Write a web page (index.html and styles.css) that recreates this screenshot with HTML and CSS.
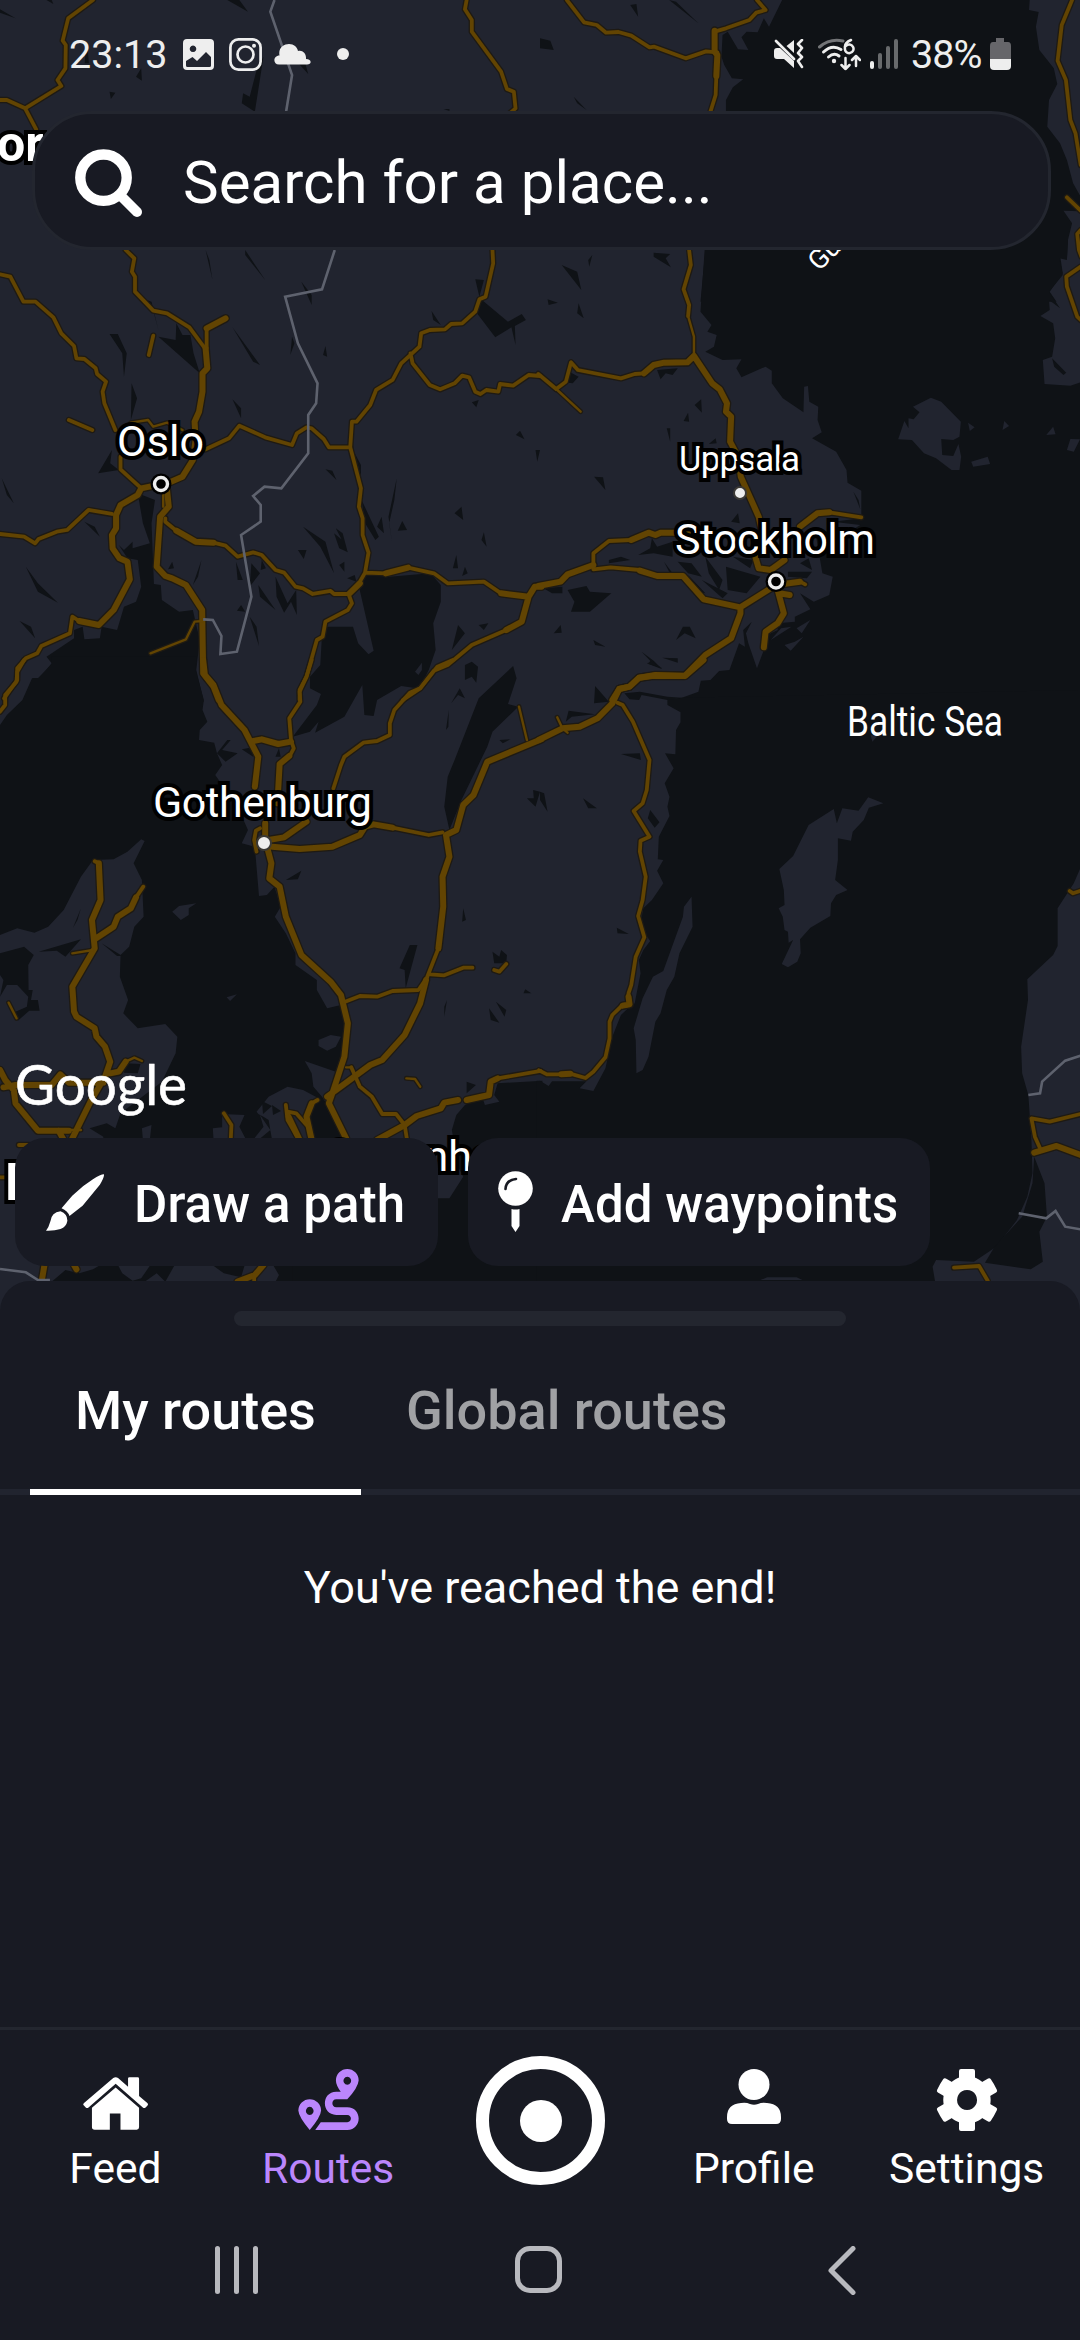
FILE: index.html
```html
<!DOCTYPE html>
<html lang="en">
<head>
<meta charset="utf-8">
<title>Routes</title>
<link rel="stylesheet" href="styles.css">
</head>
<body>
<div class="screen">
<svg class="map" viewBox="0 0 1080 1320" width="1080" height="1320" aria-label="Map">
<defs>
<g id="roads">
<g transform="scale(.34439 .33333)">
<path class="mid" d="M270 0L198 55 182 122 191 135 190 205 167 240 178 258 73 325 105 388M0 300L20 300 73 325M1355 0L1350 28 1370 60 1370 95 1455 215 1472 267 1492 275 1497 325 1480 340"/>
</g>
<g transform="translate(540 0) scale(.34439 .33333)">
<path class="mid" d="M78 0L128 67 165 75 192 98 228 96 265 107 318 142 332 140 423 175 482 154 515 157M512 228L510 285 495 335M630 0L655 30 628 38 608 60 540 85 507 95M1545 0L1515 75 1503 182 1527 240 1540 360 1555 400 1570 495M1530 592L1570 632M1570 690L1560 702 1565 750 1572 770"/>
<path class="major" d="M507 92L507 155 515 165 512 228"/>
</g>
<g transform="translate(0 240) scale(.34439 .33333)">
<path class="mid" d="M365 30L390 55 383 95 392 110 392 155 445 212 485 220 550 262 595 325M600 265L600 325M230 1143L210 1130 203 1180 120 1218 108 1240 75 1255 50 1285 50 1320 12 1375M0 103L30 110 68 185 103 185 155 232 178 280 215 318 222 355 245 357 278 385 282 402 308 425 298 455 303 490 335 570M350 650L350 688 405 740M200 540L268 570M445 287L432 345M0 882L70 890 102 910 112 897 165 875 195 870 257 810 325 822M480 835L480 845 512 872M620 908L655 917 690 950 735 937 760 945 800 990 825 998 858 1040 880 1045 908 1062 960 1053 970 1062 1012 1062M597 628L665 595 695 557 770 592 848 615 862 580 890 562 905 565 940 597 955 622 1017 622"/>
<path class="mid" d="M1430 30L1432 70 1410 170 1392 178 1380 215 1342 250 1310 252 1292 268 1248 270 1223 280 1218 320 1165 370 1140 420 1092 450 1075 495 1035 545 1022 545 1017 622 1048 745 1042 800 1053 835 1053 885 1070 938 1060 998 1045 1025 1012 1062 1022 1090 1010 1110 945 1145 937 1190 920 1200 890 1310 870 1350 870 1380M1192 340L1198 370 1248 435 1278 448 1320 430 1342 407 1362 412 1380 455 1395 462 1412 450 1447 455 1452 432 1490 437 1535 405 1568 408M1060 998L1120 1000M1185 983L1260 1000 1300 1030 1405 1025 1455 1060M1470 1170L1370 1215 1300 1275 1260 1292 1220 1345 1170 1380"/>
<path class="major" d="M655 235L600 265M597 325L602 385 588 400 588 455 578 515 565 545 568 600 560 660 530 710 490 728 410 745 400 765 350 795 337 825 337 865 325 885 327 925 347 955 370 965 377 1018 330 1110 287 1155 230 1143M485 750L490 800 465 830 455 980 480 1008 500 1015 540 1035 587 1110 590 1300 620 1340 635 1380M512 872L568 905 620 908M1045 1030L1015 1060M1120 1000L1185 983M1455 1060L1535 1070M1572 1040L1553 1040 1535 1070 1515 1145 1470 1170"/>
<path class="minor" d="M437 1240L540 1198 565 1145 590 1143M380 548L430 540 445 560 485 548 530 570M474 765V800"/>
</g>
<g transform="translate(540 240) scale(.34439 .33333)">
<path class="mid" d="M433 30L438 75 417 148 433 195 430 228M302 400L275 402 235 415 110 390 90 367 75 425 47 447M-5 402L47 447M155 985L155 940 200 903 265 900M155 988L205 982 290 990M755 1025L770 1033M840 817L933 832M1570 80L1528 110 1530 140 1560 230 1570 240"/>
<path class="major" d="M447 348L500 430 522 448 543 490 540 515 555 530 552 605 575 650 583 710 635 830 650 900M447 348L428 367 360 368 330 375 302 400M-5 1038L60 1025 80 1003 155 975M265 900L315 878 335 885 350 878 430 878M290 992L340 1008 415 1008 475 1078 582 1102 685 1035 755 1025M582 1102L582 1120 555 1195 480 1245 420 1308 330 1307 288 1313 260 1340 230 1347 210 1380M690 1050L708 1120 690 1150 655 1175 650 1222M695 1060L725 1065M755 860L805 820 840 817M625 950L635 985 670 990 710 960"/>
<path class="minor" d="M430 228L447 290V345M47 447L118 515"/>
</g>
<g transform="translate(0 660) scale(.34439 .33333)">
<path class="major" d="M590 0L595 45 620 75 643 135 710 210 750 290 740 380M770 490L770 540 788 610 782 655 812 680 830 770 875 885 960 965 990 1005 1010 1090 1000 1190 965 1300 955 1330 1005 1435M735 243L760 238 808 252 845 245M840 288L812 312 808 385 805 430M890 485L825 532 780 540M790 560L870 567 965 560 1045 525 1060 500 1085 493 1140 503M1572 238L1415 305 1375 405 1345 435 1325 510 1295 525 1305 590 1285 650 1287 740 1273 865M1237 960L1220 1030 1175 1125 1110 1200 1075 1215 950 1310"/>
<path class="major" d="M287 610L292 720 267 780 275 865 210 980 215 1055 222 1070 275 1105 280 1130 305 1160 320 1205 305 1250 265 1320 210 1435M275 838L330 800 342 770 380 745 395 712M320 1240L345 1235 365 1205M0 1230L15 1260 40 1290 45 1330 110 1412 200 1412M10 1282L45 1275 150 1275 175 1243 200 1268 300 1268M170 1412L185 1440M905 1330L890 1370 905 1440M838 1370L870 1440M1095 1440L1175 1395 1210 1368 1280 1345 1290 1328 1330 1320M1355 1320L1420 1305 1425 1265 1445 1255"/>
<path class="mid" d="M395 712L416 680M275 604L287 610M745 575L738 540 743 512 755 505M70 0L50 35 48 65 15 105 15 135 0 155M905 0L890 50 870 95 872 125 840 175 845 240 853 265 843 285M1315 0L1270 20 1220 85 1190 98 1145 150 1132 190 1132 225 1095 243 1055 248 1000 290 990 315 968 385M1140 503L1245 525 1285 517M1273 865L1237 960M1002 1025L1045 1008 1095 1010 1140 993 1215 990 1235 960M1250 943L1290 946 1345 923 1372 923M1435 930L1450 935 1470 912M650 1360L672 1395 670 1440M830 1335L835 1380 860 1425M835 1355L860 1360 890 1395M905 1330L922 1320M1020 1222L1045 1280 1080 1310 1110 1362 1150 1362 1175 1395 1182 1440M1445 1255L1570 1233"/>
<path class="minor" d="M1507 140L1530 240M210 880L270 870M365 1205L390 1193 412 1203M25 1028L48 1075M200 1410L235 1410M1005 1222H1020M1180 1255L1205 1257 1220 1280"/>
</g>
<g transform="translate(540 660) scale(.34439 .33333)">
<path class="major" d="M475 0L422 47 335 45 288 53 260 80 230 87 210 130 167 175 115 200 65 205 -4 240M257 1010L260 1033 240 1037M62 1243L88 1241"/>
<path class="mid" d="M225 128L240 135 270 185 318 300 310 390 298 430 272 453 318 530 292 542 290 575 307 650 298 720 285 768 303 832 278 890 265 975 257 1000 260 1035 235 1040 210 1065 202 1085 202 1135 190 1192 155 1235 132 1254 95 1243 20 1243 -3 1231M1538 693L1548 700 1570 692M1570 1362L1480 1385 1427 1375 1437 1430 1452 1465"/>
<path class="minor" d="M50 172L65 205 80 218"/>
</g>
<g transform="translate(0 1040) scale(.34439 .33333)">
<path class="major" d="M130 670L120 730M765 675L740 705 690 725M215 675L222 688"/>
<path class="mid" d="M0 412H20M55 315H85M738 705V725"/>
</g>
<g transform="translate(540 1040) scale(.34439 .33333)">
<path class="major" d="M1435 338L1500 318 1570 345"/>
<path class="mid" d="M1202 683L1275 678 1300 722"/>
</g>
</g>
</defs>
<rect class="land" width="1080" height="1320"/>

<g class="water">
<g transform="scale(.34439 .33333)">
<path d="M765 170L740 335 702 310 706 280 725 290 745 210ZM840 160L885 185 895 222ZM660 0L720 35 695 0ZM395 230L410 205 412 242ZM318 275L335 278 322 297ZM0 28L45 55 0 38ZM135 0H150L155 12ZM248 160L255 150 258 190 246 190ZM1288 327H1305V333Z"/>
</g>
<g transform="translate(540 0) scale(.34439 .33333)">
<path d="M703 0L665 80 650 55 632 97 600 95 585 112 605 150 575 148 545 95 530 105 527 170 535 195 557 235 590 238 560 262 540 300 540 340 480 750 466 905H1500L1480 875 1518 820 1510 765 1530 775 1533 720 1545 670 1520 632 1570 634V590L1548 550 1530 480 1510 430 1473 380 1478 300 1502 252 1492 205 1450 150 1440 80 1448 36 1420 30 1422 0ZM0 115L30 122 40 150 0 145ZM262 15L280 12 285 50ZM375 0L460 70 395 5ZM98 290L135 330 108 310Z"/>
</g>
<g transform="translate(0 240) scale(.34439 .33333)">
<path d="M400 760L415 850 435 910 385 925 385 905 360 930 345 915 370 955 400 960 410 1040 395 1085 360 1100 340 1170 295 1160 290 1195 245 1198 240 1160 215 1170 215 1195 135 1250 150 1270 115 1315 95 1315 65 1385H592L570 1290 580 1200 560 1110 520 1115 470 1080 467 1035 447 1032 440 850 450 780Z"/>
<path d="M1040 1030L1065 1005 1130 1010 1250 1000 1280 1035 1280 1085 1258 1150 1265 1230 1245 1290 1230 1320 1210 1345 1165 1338 1095 1380 1085 1428 1058 1425 1052 1335 1000 1430 915 1478 925 1445 900 1475 850 1490 920 1395 932 1362 900 1345 900 1310 930 1275 935 1185 950 1160 1025 1160 1040 1210 1070 1243 1085 1232Z"/>
<path d="M318 282H342L368 340 360 410 355 340ZM382 430L398 475 380 540ZM325 630L320 670 345 690 285 700ZM675 262L755 375 735 365ZM460 290L510 300 512 250 530 285 553 285 562 340 580 400ZM412 175L440 185 460 270 445 212ZM597 30L608 60 617 120ZM712 30L770 120 712 45ZM842 30L905 122ZM875 125L905 165V195ZM675 478L700 505V535ZM945 318L950 350 938 345ZM848 290L843 345 855 310ZM1253 213L1280 255 1258 240ZM1380 118L1405 120 1392 170ZM1397 178L1475 245 1515 222 1527 240 1495 258 1497 315 1485 262 1438 292 1385 220ZM880 860L945 905 970 1000 930 920ZM970 880L1000 905 1010 937 985 925ZM975 865L995 880 1008 930ZM865 930H890L882 957ZM985 975L1000 965V995ZM1008 1015L1030 1005 1035 1025ZM1030 640L1048 675 1048 710ZM1050 780L1100 890 1090 900 1060 850ZM1095 860L1108 830 1115 880ZM1168 843L1182 870 1155 872ZM1152 715L1145 780 1130 850 1138 905 1128 830ZM1340 800L1345 840 1320 820ZM1405 877L1413 920 1398 900ZM1325 945L1330 985 1315 985ZM1350 980L1358 1000 1342 1008ZM1370 487L1390 480 1383 502ZM1510 572L1523 598 1498 585ZM1555 630H1568L1560 665ZM75 980L110 1030 168 1088 110 1055ZM57 1143L90 1160 102 1195ZM5 715L40 790 20 765ZM245 845L275 860 290 890ZM685 965L705 1020 690 1020ZM730 970L755 1000 725 1040ZM760 960L772 985 757 990ZM750 1035L800 1110 755 1070ZM800 1010L835 1090 860 1050 862 1125 845 1085 825 1118 803 1070ZM725 1130L745 1160 752 1218ZM585 960L575 1010 560 1035ZM500 965L505 985 488 988ZM945 688L965 692 977 720ZM1390 1155L1418 1150 1405 1170ZM1330 1155L1350 1180 1312 1230ZM1350 1275L1370 1265 1388 1280 1383 1328 1370 1310 1350 1320ZM700 1095L712 1115 688 1112Z"/>
</g>
<g transform="translate(540 240) scale(.34439 .33333)">
<path d="M480 0L466 215 498 255 486 275 513 285 505 320 480 335 530 360 585 358 570 385 585 412 655 380 673 392 673 430 705 475 765 517 767 440 778 438 782 485 808 500 806 540 818 577 790 595 860 635 890 690 893 728 933 752V835L850 845 930 855 890 880 800 880 820 1000 850 1010 840 1065 795 1085 755 1060 785 1108 740 1130V1145L690 1150V1170L660 1185 650 1230 630 1285 605 1210 598 1180 615 1145 590 1170 595 1220 578 1210 550 1290 520 1293 495 1320 467 1322 460 1355 412 1373 370 1385H1575V425L1540 437 1465 432 1460 360 1487 350 1496 295 1490 250 1453 228 1480 210 1478 180 1510 205 1478 155 1518 105 1508 55 1530 60 1533 0Z"/>
<path d="M325 895L340 920 385 905V950L330 940 285 945 320 925ZM200 960L235 950 262 960 200 970ZM400 965L440 970 470 1010 430 1000ZM480 950L530 1020 520 1050 490 1000ZM540 980L640 1010 600 1060 545 1050ZM560 950L620 960 610 985ZM360 965L385 1000 375 995ZM470 1020L545 1060 530 1075ZM430 1005L480 1060 460 1055ZM720 995L790 995 775 1015 720 1010ZM755 970L780 955 790 990ZM80 1050L135 1038 145 1055 207 1060 145 1115 90 1115 100 1085ZM395 1200L415 1160H435L452 1195 420 1180ZM40 1180L60 1155 63 1178ZM155 1200L190 1220 160 1215ZM295 1235L330 1262 355 1288 315 1272 320 1262ZM355 1253L400 1255V1268ZM10 1045L65 1040 65 1060 35 1060ZM63 75L108 95 120 150ZM330 38L378 42 365 55 380 82 330 50ZM140 60L152 45 143 80ZM22 178L52 188 25 195ZM112 190L127 235 108 220ZM340 390L400 385 385 405 365 400 350 418ZM85 395L112 410 95 430 82 428ZM449 495L468 478 470 518ZM430 518L433 545 417 543ZM368 565H378V605ZM510 595L513 610 490 612ZM157 710L183 712 190 750ZM575 820L580 850 555 845ZM910 755L925 780 930 808ZM1487 355L1528 398 1520 405 1493 380Z"/>
</g>
<g transform="translate(0 660) scale(.34439 .33333)">
<path d="M150 12L110 55 93 55 65 120 20 165 0 195V825L50 805 100 818 140 800 185 750 235 650 270 600 330 598 370 575 410 538 420 543 388 610 412 660 417 770 390 800 375 860 350 885 348 950 372 1020 358 1060 400 1105 480 1092 515 1130 510 1180 470 1265 350 1360 335 1405 310 1390 260 1405 300 1430V1450H1020L960 1350 935 1310 910 1280 905 1240 885 1203 975 1235 1000 1200 1010 1090 990 1035 950 1045 920 990V960L858 915V880L830 820 798 770 815 740 797 680 775 705 752 708 740 560 702 550 720 510 690 440 625 345 645 315 630 280 622 248 578 240 580 210 602 185 588 150 592 120 568 30 570 -10 150 -10Z"/>
<path d="M1490 18L1500 55 1475 132 1505 140 1430 215 1415 260 1340 420 1305 510 1290 440 1300 350 1320 300 1390 115ZM1575 1262L1445 1270 1435 1305 1450 1325 1408 1335 1400 1310 1350 1335 1325 1365 1312 1410 1330 1520 1345 1550 1305 1615 1240 1615 830 1820 815 1870H1575Z"/>
<path d="M830 660L875 632 865 658ZM1190 855H1212L1178 985 1175 930 1160 925ZM1345 745L1353 780 1342 785ZM1430 875L1450 890 1455 870 1472 885 1470 910 1435 910ZM1298 1020L1290 1070 1290 1040ZM1440 1025L1470 1050 1465 1070ZM1420 1045L1450 1088 1425 1080ZM1525 988L1543 1000 1520 1000ZM1303 150L1302 200 1295 210ZM1530 415L1550 415 1548 390 1568 395 1555 440ZM1310 130L1335 85 1350 115 1330 105ZM112 875L235 838 190 890 165 872ZM235 745L225 780 212 803ZM0 880L70 860 98 885 82 915 83 990 95 990 90 1020H110L115 1052H85L52 1082 45 1055 78 1040 82 1010 50 975 20 975 0 1010 10 960 0 945ZM295 850L355 888 340 888ZM660 240L670 240 645 270 690 280 655 305 630 280ZM800 290L810 265 815 290ZM702 268L735 262 735 290ZM1450 240L1482 238 1460 250ZM1355 1265L1382 1275 1355 1300ZM365 1210L408 1212 400 1240 360 1238Z"/>
</g>
<g transform="translate(540 660) scale(.34439 .33333)">
<path d="M412 113L370 118V135L408 157V187L395 210 393 283 363 280 388 325 362 370 376 410 370 440 376 468 345 530 342 598 358 600 340 632 358 670 325 720 300 745 290 800 320 843 300 870 287 900 292 940 275 1030 260 1040 235 1065 210 1130 190 1225 155 1293 115 1285 135 1264H35L25 1278 0 1262H-10V1870H1148L1140 1820 1150 1800 1260 1805 1325 1760 1385 1680 1415 1610 1430 1540 1427 1440 1418 1305 1400 1240 1397 1160 1417 1020 1415 958 1490 885 1503 858V745L1550 670 1575 610V90Z"/>
<path d="M1435 1490L1465 1570 1472 1670 1450 1715 1460 1805 1425 1828 1292 1808 1320 1760 1400 1670 1430 1570ZM160 78L200 125 157 130ZM83 152L160 163 92 170 75 185ZM235 282L290 280 293 300ZM125 415L165 445H140ZM320 450L347 487 333 503 313 475ZM223 803L258 822 225 820ZM0 395L12 400 22 455 0 420ZM245 100L290 95 370 110 412 113 370 120 295 105 288 120 260 118ZM310 10L355 25 325 5Z"/>
</g>
<g transform="translate(0 1040) scale(.34439 .33333)">
<path d="M150 725L190 690 230 700 270 688 300 670H340L355 700 385 722 410 715 440 670H510L480 725 455 700 420 725ZM610 670L650 700 700 712 712 670ZM800 725L810 705 790 670H850V725Z"/>
</g>
</g>

<g class="land">
<g transform="translate(540 240) scale(.34439 .33333)">
<path d="M1135 473L1165 485 1222 545 1218 590 1200 600 1165 597 1168 645 1200 648 1215 612 1223 650 1218 690 1195 690 1150 655 1115 640 1080 600 1040 598 1058 543 1070 565 1070 535 1085 538 1102 517 1083 500ZM1243 548L1262 562 1248 573ZM1348 543L1362 558 1343 570ZM1470 585L1490 560 1497 583ZM1540 597L1568 598 1550 635 1530 630ZM1252 665L1300 650 1307 672 1258 680ZM785 1140L760 1180 745 1165ZM765 1190L728 1232 710 1215 740 1205ZM700 1165L730 1160 670 1200Z"/>
</g>
<g transform="translate(540 660) scale(.34439 .33333)">
<path d="M440 710L443 800 405 880 390 950 368 990 350 1060 335 1085 315 1190 298 1230 280 1240 278 1140 272 1105 298 1015 328 950 358 933 415 770 418 740ZM853 447L862 490 878 445 925 452 953 412 997 430 955 443 940 480 908 515 903 542 865 535 865 600 857 660 893 690 860 705 845 730 843 768 785 803 755 838 757 880 747 905 720 922 702 912 735 840 722 848 720 815 710 810 705 770 693 745 710 735 708 690 695 627 735 588 780 495ZM960 225L980 228 965 245ZM640 1860L660 1852H745L762 1860Z"/>
</g>
<g transform="translate(0 660) scale(.34439 .33333)">
<path d="M500 755L520 738 570 730 548 745V765L525 780ZM658 1012L688 1003 668 1023ZM925 1140L960 1125 990 1130 975 1160 950 1172 925 1158ZM745 1355L780 1310 835 1280 880 1290 925 1315 905 1340 900 1440H790L780 1380 765 1370 750 1362ZM755 1365L765 1400 735 1440H750L785 1410ZM618 1405L645 1402V1362L710 1365 695 1400 715 1440H620ZM412 1405L440 1395 435 1440H415ZM1205 35L1225 8V30L1215 45Z"/>
</g>
</g>
<path class="water" d="M262 1101l10 5-9 8zM272 1105l9 6-8 4z"/>

<use href="#roads" class="casing"/>
<use href="#roads" class="fill"/>

<g class="border-line">
<path transform="scale(.34439 .33333)" d="M797 0L785 35 848 225 830 340"/>
<path transform="translate(0 240) scale(.34439 .33333)" d="M972 30L935 148 828 170 865 310 922 430 918 490 895 525 895 640 817 745 768 740 735 768 757 795 757 845 700 885 730 1070 688 1235 640 1242 643 1188 618 1140 590 1138"/>
<path transform="translate(540 660) scale(.34439 .33333)" d="M1570 1187L1525 1202 1458 1265 1452 1300 1418 1305M1390 1660L1470 1675 1497 1653 1525 1700 1570 1708"/>
<path transform="translate(0 1040) scale(.34439 .33333)" d="M0 687L75 697 110 720H145"/>
</g>

<g class="place">
<text x="117" y="456" font-size="43" textLength="87">Oslo</text>
<text x="679" y="471" font-size="35" textLength="121">Uppsala</text>
<text x="675" y="554" font-size="43" textLength="200">Stockholm</text>
<text x="153" y="817" font-size="43" textLength="219">Gothenburg</text>
<text x="325" y="1171" font-size="43">Copenhagen</text>
<text class="heavy" x="-3" y="161" font-size="50">or</text>
<text class="heavy" x="5" y="1200" font-size="52">H</text>
</g>
<g class="sea-name">
<text x="847" y="736" font-size="42" textLength="156" lengthAdjust="spacingAndGlyphs">Baltic Sea</text>
<text font-size="27" transform="translate(819 272) rotate(-45)">Gulf of Bothnia</text>
</g>
<g class="capital"><circle class="halo" cx="161" cy="484" r="10.500"/><circle cx="161" cy="484" r="6.500"/><circle class="halo" cx="776" cy="581.500" r="10.500"/><circle cx="776" cy="581.500" r="6.500"/></g>
<g class="city"><circle cx="740" cy="493" r="6"/><circle cx="264" cy="843" r="7"/></g>
<text class="brand" x="15" y="1105" font-size="56" textLength="172" lengthAdjust="spacingAndGlyphs">Google</text>
</svg>

<header class="status">
<div class="status-left">
<span class="clock">23:13</span>
<svg width="31" height="31" viewBox="0 0 31 31"><path fill-rule="evenodd" d="M4 0H27a4 4 0 0 1 4 4V27a4 4 0 0 1-4 4H4a4 4 0 0 1-4-4V4a4 4 0 0 1 4-4ZM3 22V26.500Q3 28 4.500 28H26.500Q28 28 28 26.500V18L23 13 14 22 9.500 18ZM10 6.500a3.300 3.300 0 1 0 .01 0Z"/></svg>
<svg class="outline" width="33" height="33" viewBox="0 0 33 33" stroke-width="2.700"><rect x="1.400" y="1.400" width="30.200" height="30.200" rx="8"/><circle cx="16.500" cy="16.500" r="8"/><circle class="solid" cx="25" cy="7.800" r="2"/></svg>
<svg class="cloud" width="37" height="21" viewBox="0 0 37 21"><path d="M5 20.500C-1.500 20.500-1 11.500 5.500 11.500 4 3.500 10 0 15 0 20 0 23 3 24 7 28 5.500 32.500 9 32 15 38 15 38 20.500 33 20.500Z"/></svg>
<i class="more"></i>
</div>
<div class="status-right">
<svg width="30" height="30" viewBox="0 0 30 30"><path d="M3 9H6L20 22V29L10 20H3Q0 20 0 17V12Q0 9 3 9ZM20 1V14L12.500 7Z"/><path class="line" d="M2 2L20 20M28 1L24 5 28 9 24 14 28 18 24 22 28 28" stroke-width="2.600"/></svg>
<svg width="43" height="33" viewBox="0 0 43 33"><g class="line" stroke-width="3"><path opacity=".45" d="M1.500 9Q12 0 25 3"/><path d="M5.500 14Q14 6 23 11.500M10.500 19Q16 14 21 18"/></g><circle cx="16" cy="23" r="2.200"/><path class="line" stroke-width="2.500" d="M33 2Q26 5 27 10A4.300 4.300 0 1 0 28 8M27.500 20V31M23.500 27L27.500 31 31.500 27M38 28V18M34 22L38 18 42 22"/></svg>
<svg width="28" height="30" viewBox="0 0 28 30"><rect y="22" width="4" height="8" rx="2"/><g opacity=".4"><rect x="8" y="14" width="4" height="16" rx="2"/><rect x="16" y="7" width="4" height="23" rx="2"/><rect x="24" width="4" height="30" rx="2"/></g></svg>
<span class="percent">38%</span>
<svg width="21" height="32" viewBox="0 0 21 32"><path class="drained" d="M6 0H14V4H18Q21 4 21 8V21H0V8Q0 4 3 4H6Z"/><path d="M0 21H21V28Q21 32 17 32H4Q0 32 0 28Z"/></svg>
</div>
</header>

<div class="search">
<svg class="outline" width="68" height="69" viewBox="0 0 68 69"><circle cx="28.500" cy="28.700" r="23.200" stroke-width="10.400"/><path d="M45 46L62 63" stroke-width="10" stroke-linecap="round"/></svg>
<span>Search for a place...</span>
</div>

<div class="actions">
<button class="action">
<svg width="58" height="57" viewBox="134 402 168 171" preserveAspectRatio="none"><path d="M302 403Q303 413 290 434L240 497 202 528Q197 513 179 505L210 467Q240 437 270 418 292 403 302 403ZM176 514Q196 522 196 542 193 560 176 567 158 573 134 572 142 562 147 543 150 518 176 514Z"/></svg>
<span>Draw a path</span></button>
<button class="action pin">
<svg width="35" height="61" viewBox="0 0 35 61"><circle cx="17.500" cy="17.500" r="17.300"/><path d="M13.500 38Q17.500 39 21.500 38V55L17.500 61 13.500 55Z"/><path d="M7.500 18Q8 9 18 8" fill="none" stroke="#181a23" stroke-width="2.600" stroke-linecap="round"/></svg>
<span>Add waypoints</span></button>
</div>

<main class="sheet">
<div class="grip"></div>
<nav class="tabs"><a class="tab active">My routes</a><a class="tab global">Global routes</a></nav>
<p class="end">You've reached the end!</p>
</main>

<nav class="bottom">
<a class="item"><svg class="feed" width="65" height="53" viewBox="241 231 189 157" preserveAspectRatio="none"><path d="M329 234Q336 229 343 234L372 260V235Q372 232 376 232H400Q404 232 404 236V287L428 308Q432 312 428 316L423 321Q419 325 415 321L336 251 257 321Q253 325 249 321L243 315Q240 312 244 308ZM336 262L404 322V380Q404 387 397 387H350V339H319V387H275Q267 387 267 379V322Z"/></svg><span>Feed</span></a>
<a class="item current"><svg class="route" width="61" height="61" viewBox="864 207 177 182" preserveAspectRatio="none"><path fill-rule="evenodd" d="M898 389Q866 350 865 331A33 34 0 0 1 931 331Q930 350 898 389ZM898 320a11 12 0 1 0 .1 0ZM1007 297H975C960 297 960 321 975 321H1007C1051 321 1051 389 1007 389H914L930 366H1007C1021 366 1021 344 1007 344H975C931 344 931 275 975 275H988Q974 254 974 241A33 34 0 0 1 1040 241Q1038 263 1007 297ZM1007 230a11 12 0 1 0 .1 0Z"/></svg><span>Routes</span></a>
<a class="record" aria-label="Record"><i></i></a>
<a class="item"><svg class="person" width="54" height="55" viewBox="0 0 54 55"><ellipse cx="27" cy="15.500" rx="15.500" ry="15.500"/><path d="M14 34Q19 33 23 35 27 36.500 31 35 35 33 40 34 54 35 54 48V50Q54 55 49 55H5Q0 55 0 50V48Q0 35 14 34Z"/></svg><span>Profile</span></a>
<a class="item"><svg class="gear" width="62" height="62" viewBox="-31 -31 62 62"><defs><path id="tooth" d="M-8 -20V-29Q-8 -31 -6 -31 0 -31.500 6 -31 8 -31 8 -29V-20Z"/></defs><path fill-rule="evenodd" d="M0-23.700A23.700 23.700 0 1 1-.1-23.700ZM0-10A10 10 0 1 0 .1-10Z"/><use href="#tooth"/><use href="#tooth" transform="rotate(60)"/><use href="#tooth" transform="rotate(120)"/><use href="#tooth" transform="rotate(180)"/><use href="#tooth" transform="rotate(240)"/><use href="#tooth" transform="rotate(300)"/></svg><span>Settings</span></a>
</nav>

<footer class="system">
<svg width="43" height="48" viewBox="0 0 43 48"><path d="M2.500 2.500V45.500M21.500 2.500V45.500M40.500 2.500V45.500"/></svg>
<svg class="home" width="47" height="47" viewBox="0 0 47 47"><rect x="2.500" y="2.500" width="42" height="42" rx="12.500"/></svg>
<svg width="28" height="49" viewBox="0 0 28 49"><path d="M25 2.500L3 24.500 25 46.500"/></svg>
</footer>
</div>
</body>
</html>
```
FILE: styles.css
```css
* { box-sizing: border-box; }
body { margin: 0; background: #181a23; color: #fff; font-family: Roboto, sans-serif; }
svg { display: block; fill: currentColor; flex: none; }
.outline { fill: none; stroke: currentColor; }
.screen { position: relative; width: 1080px; height: 2340px; overflow: hidden; display: flex; flex-direction: column; }

/* Map behind the page */
.map { position: absolute; left: 0; top: 0; z-index: -1; font-family: Roboto, sans-serif; }
.land { fill: #21242f; }
.water { fill: #0f1216; }
#roads path { fill: none; stroke: var(--tone); stroke-linejoin: round; stroke-linecap: round; vector-effect: non-scaling-stroke; }
#roads .major { stroke-width: calc(6px + var(--edge)); }
#roads .mid { stroke-width: calc(3.8px + var(--edge)); }
#roads .minor { stroke-width: calc(2.4px + var(--edge)); }
.casing { --tone: #1e1a13; --edge: 2.6px; }
.fill { --tone: #624402; --edge: 0px; }
.border-line path { fill: none; stroke: #5e626e; stroke-width: 2.6px; vector-effect: non-scaling-stroke; }
.place text { fill: #fff; stroke: #000; stroke-width: 8px; stroke-linejoin: miter; paint-order: stroke; }
.place .heavy { font-weight: 700; }
.sea-name { fill: #fff; }
.capital circle { fill: #000; stroke: #eee; stroke-width: 3.4px; }
.capital .halo { stroke: none; }
.city circle { fill: #eee; stroke: #3b3935; stroke-width: 2px; }
.brand { fill: #fff; font-family: Lato, sans-serif; stroke: #fff; stroke-width: .6px; }

/* Status bar */
.status { height: 111px; padding: 0 69px 3px 69px; display: flex; justify-content: space-between; align-items: center; color: #eee; font-size: 39.5px; line-height: 46px; }
.status-left, .status-right { display: flex; align-items: center; }
.clock { width: 114px; padding-top: 2px; }
.status-left svg { margin-right: 15px; }
.status-left svg:nth-of-type(2) { margin-right: 12px; }
.status-left .cloud { margin-right: 26px; }
.more { width: 12px; height: 12px; border-radius: 50%; background: #eee; }
.status .solid { fill: #eee; stroke: none; }
.line { fill: none; stroke: #eee; stroke-linecap: round; stroke-linejoin: round; }
.drained { fill: #66666a; }
.status-right svg:nth-of-type(1) { margin-right: 14px; }
.status-right svg:nth-of-type(2) { margin-right: 9px; }
.percent { width: 79px; margin-left: 13px; padding-top: 2px; letter-spacing: -1px; }

/* Search */
.search { margin: 0 29px 0 32px; height: 139px; border: 3px solid #23262f; border-radius: 60px; background: #181a23; display: flex; align-items: center; gap: 40px; padding-left: 40px; font-size: 60px; line-height: 70px; letter-spacing: .05px; flex: none; }
.search svg { margin-top: 5px; }
.search span { padding-top: 4px; }

/* Map buttons */
.actions { margin-top: 888px; padding: 0 15px; display: flex; gap: 30px; flex: none; }
.action { width: 423px; height: 128px; border: 0; border-radius: 30px; background: #181a23; color: #fff; font: 500 51px/60px Roboto, sans-serif; letter-spacing: .1px; display: flex; align-items: center; padding: 0 0 0 31px; gap: 30px; white-space: nowrap; }
.action span { padding-top: 5px; }
.action.pin { width: 462px; padding-left: 30px; gap: 28px; }
.action.pin svg { margin-top: -2px; }

/* Sheet */
.sheet { margin-top: 15px; height: 746px; border-radius: 30px 30px 0 0; background: #181a23; flex: none; }
.grip { width: 612px; height: 15px; border-radius: 8px; background: #23262f; margin: 0 auto; position: relative; top: 30px; }
.tabs { height: 199px; border-bottom: 6px solid #21242f; display: flex; padding-left: 30px; font-size: 54px; font-weight: 500; line-height: 64px; }
.tab { height: 199px; padding: 83px 45px 0; color: #a0a1a4; white-space: nowrap; }
.tab.active { width: 331px; color: #fff; border-bottom: 6px solid #fff; }
.end { margin: 66px 0 0; text-align: center; font-size: 45px; line-height: 54px; }

/* Bottom navigation */
.bottom { height: 192px; border-top: 3px solid #23262f; display: grid; grid-template-columns: repeat(5, 1fr); padding: 0 7px 0 9px; background: #181a23; flex: none; }
.item { height: 182px; display: flex; flex-direction: column; align-items: center; justify-content: space-between; padding: 39px 0 18px; font-size: 42.5px; line-height: 50px; }
.item.current { color: #bb86fc; }
.feed { margin-top: 8px; }
.record { width: 129px; height: 129px; margin: 26px auto 0; border: 13px solid #fff; border-radius: 50%; display: grid; place-items: center; }
.record i { width: 42px; height: 42px; border-radius: 50%; background: #fff; }

/* System navigation */
.system { flex: 1; display: flex; padding: 27px 224px 0 215px; color: #b8b9be; }
.system svg { fill: none; stroke: currentColor; stroke-width: 5px; stroke-linecap: round; stroke-linejoin: round; }
.system .home { margin: 0 auto 0 257px; }
```
